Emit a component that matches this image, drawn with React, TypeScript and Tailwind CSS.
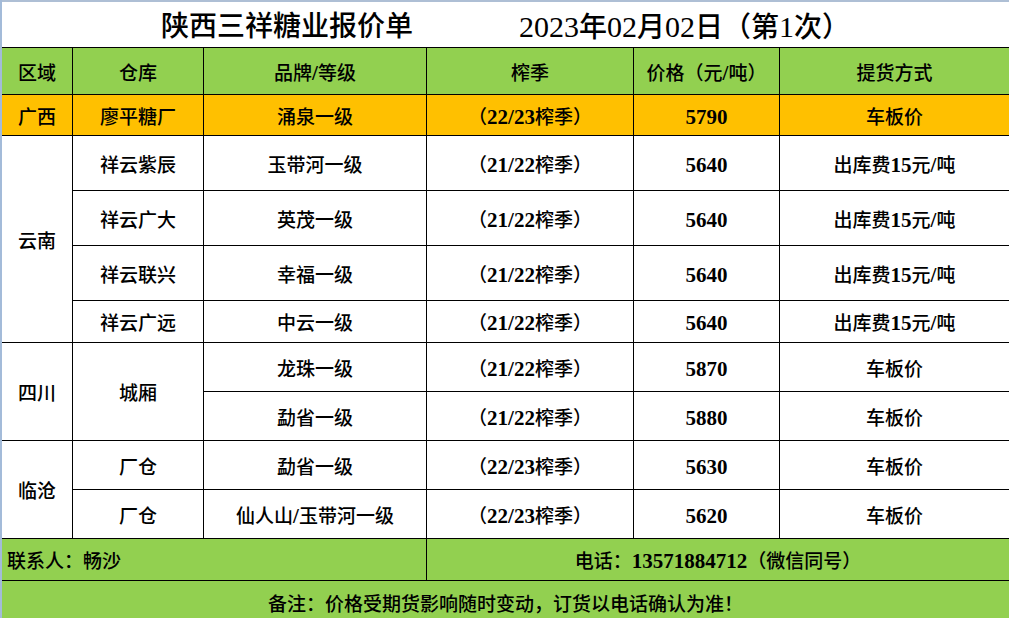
import React from "react";

const FONT = {
  fontFamily: '"Liberation Serif", "Noto Sans CJK SC", serif',
};

function T({ s, big = "text-[21px] font-bold" }: { s: string; big?: string }) {
  const parts = s.split(/([\x21-\x7e]+)/);
  return (
    <>
      {parts.map((p, i) =>
        /^[\x21-\x7e]+$/.test(p) ? (
          <span key={i} className={big + " leading-none"}>
            {p}
          </span>
        ) : (
          <span key={i}>{p}</span>
        )
      )}
    </>
  );
}

function Cell({
  children,
  className = "",
}: {
  children?: React.ReactNode;
  className?: string;
}) {
  const content =
    typeof children === "string" ? <T s={children} /> : children;
  return (
    <div
      className={
        "flex items-center justify-center pt-[4px] border-r border-b border-black text-[19px] leading-none font-medium text-black whitespace-nowrap " +
        className
      }
    >
      <span className="flex items-baseline">{content}</span>
    </div>
  );
}

type Row = {
  wh: string;
  brand: string;
  season: string;
  price: string;
  pick: string;
};

const yunnan: Row[] = [
  { wh: "祥云紫辰", brand: "玉带河一级", season: "（21/22榨季）", price: "5640", pick: "出库费15元/吨" },
  { wh: "祥云广大", brand: "英茂一级", season: "（21/22榨季）", price: "5640", pick: "出库费15元/吨" },
  { wh: "祥云联兴", brand: "幸福一级", season: "（21/22榨季）", price: "5640", pick: "出库费15元/吨" },
  { wh: "祥云广远", brand: "中云一级", season: "（21/22榨季）", price: "5640", pick: "出库费15元/吨" },
];

export default function App() {
  return (
    <div className="w-[1009px] h-[618px] overflow-hidden bg-white" style={FONT}>
      <div className="flex flex-col border-l-2 border-[#a3bbd9]">
        <div className="h-[2px] bg-[#aebfd5]" />
        <div className="grid grid-cols-[71px_131px_223px_207px_146px_1fr] grid-rows-[46px_47px_41px_55px_55px_55px_42px_49px_49px_49px_49px_42px_44px]">
          {/* title */}
          <div className="col-span-6 flex items-center justify-center pt-[5px] border-b border-black bg-white text-[28px] leading-none font-medium text-black whitespace-nowrap">
            <span>陕西三祥糖业报价单</span>
            <span className="ml-[106px] flex items-baseline">
              <T s="2023年02月02日（第1次）" big="text-[30px]" />
            </span>
          </div>

          {/* header */}
          <Cell className="bg-[#92d050]">区域</Cell>
          <Cell className="bg-[#92d050]">仓库</Cell>
          <Cell className="bg-[#92d050]">品牌/等级</Cell>
          <Cell className="bg-[#92d050]">榨季</Cell>
          <Cell className="bg-[#92d050]">价格（元/吨）</Cell>
          <Cell className="bg-[#92d050] border-r-0">提货方式</Cell>

          {/* guangxi */}
          <Cell className="bg-[#ffc000]">广西</Cell>
          <Cell className="bg-[#ffc000]">廖平糖厂</Cell>
          <Cell className="bg-[#ffc000]">涌泉一级</Cell>
          <Cell className="bg-[#ffc000]">（22/23榨季）</Cell>
          <Cell className="bg-[#ffc000]">5790</Cell>
          <Cell className="bg-[#ffc000] border-r-0">车板价</Cell>

          {/* yunnan */}
          <Cell className="row-span-4">云南</Cell>
          {yunnan.map((r, i) => (
            <React.Fragment key={i}>
              <Cell>{r.wh}</Cell>
              <Cell>{r.brand}</Cell>
              <Cell>{r.season}</Cell>
              <Cell>{r.price}</Cell>
              <Cell className="border-r-0">{r.pick}</Cell>
            </React.Fragment>
          ))}

          {/* sichuan */}
          <Cell className="row-span-2">四川</Cell>
          <Cell className="row-span-2">城厢</Cell>
          <Cell>龙珠一级</Cell>
          <Cell>（21/22榨季）</Cell>
          <Cell>5870</Cell>
          <Cell className="border-r-0">车板价</Cell>
          <Cell>勐省一级</Cell>
          <Cell>（21/22榨季）</Cell>
          <Cell>5880</Cell>
          <Cell className="border-r-0">车板价</Cell>

          {/* lincang */}
          <Cell className="row-span-2">临沧</Cell>
          <Cell>厂仓</Cell>
          <Cell>勐省一级</Cell>
          <Cell>（22/23榨季）</Cell>
          <Cell>5630</Cell>
          <Cell className="border-r-0">车板价</Cell>
          <Cell>厂仓</Cell>
          <Cell>仙人山/玉带河一级</Cell>
          <Cell>（22/23榨季）</Cell>
          <Cell>5620</Cell>
          <Cell className="border-r-0">车板价</Cell>

          {/* contact */}
          <Cell className="col-span-3 bg-[#92d050] !justify-start pl-[5px]">联系人：畅沙</Cell>
          <Cell className="col-span-3 bg-[#92d050] border-r-0">电话：13571884712（微信同号）</Cell>

          {/* remark */}
          <Cell className="col-span-6 bg-[#92d050] border-r-0">
            备注：价格受期货影响随时变动，订货以电话确认为准！
          </Cell>
        </div>
      </div>
    </div>
  );
}
